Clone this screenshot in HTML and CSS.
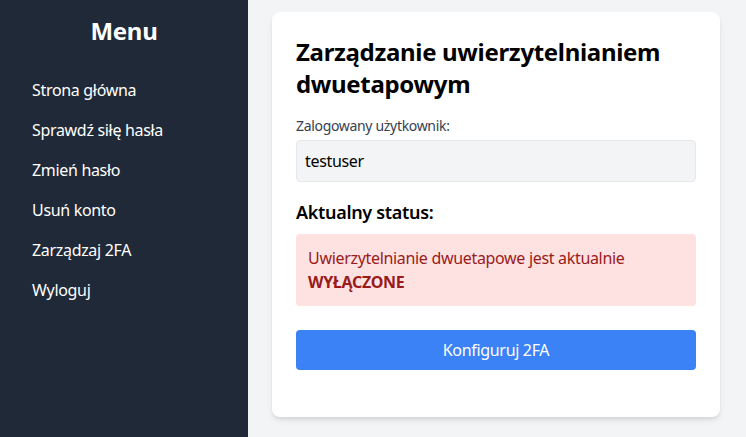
FILE: index.html
```html
<!DOCTYPE html>
<html lang="pl">
<head>
<meta charset="utf-8">
<title>Zarządzaj 2FA</title>
<link rel="stylesheet" href="styles.css">
</head>
<body>
<div class="layout">
  <aside class="sidebar">
    <h2 class="sidebar-title">Menu</h2>
    <ul class="nav">
      <li><a href="#">Strona główna</a></li>
      <li><a href="#">Sprawdź siłę hasła</a></li>
      <li><a href="#">Zmień hasło</a></li>
      <li><a href="#">Usuń konto</a></li>
      <li><a href="#">Zarządzaj 2FA</a></li>
      <li><a href="#">Wyloguj</a></li>
    </ul>
  </aside>
  <main class="main">
    <section class="card">
      <h1 class="card-title">Zarządzanie uwierzytelnianiem dwuetapowym</h1>
      <div class="field">
        <label class="field-label">Zalogowany użytkownik:</label>
        <div class="field-value">testuser</div>
      </div>
      <h3 class="status-title">Aktualny status:</h3>
      <div class="alert">Uwierzytelnianie dwuetapowe jest aktualnie <strong>WYŁĄCZONE</strong></div>
      <button class="btn" type="button">Konfiguruj 2FA</button>
    </section>
  </main>
</div>
</body>
</html>
```

FILE: styles.css
```css
* { box-sizing: border-box; }
html, body { margin: 0; padding: 0; height: 100%; }
body {
  font-family: "Noto Sans", "Open Sans", sans-serif;
  letter-spacing: -0.02em;
  background: #f3f4f6;
  color: #111827;
}
.layout {
  display: flex;
  min-height: 100vh;
}
.sidebar {
  width: 248px;
  flex-shrink: 0;
  background: #1f2937;
  color: #ffffff;
  padding: 15px 16px 12px;
}
.sidebar-title {
  margin: 0 0 23px;
  font-size: 24px;
  line-height: 32px;
  font-weight: 700;
  text-align: center;
}
.nav {
  list-style: none;
  margin: 0;
  padding: 0;
}
.nav li {
  padding: 8px 16px;
}
.nav a {
  color: #ffffff;
  text-decoration: none;
  font-size: 16px;
  line-height: 24px;
}
.main {
  flex: 1;
  padding: 12px 24px;
}
.card {
  width: 448px;
  background: #ffffff;
  border-radius: 8px;
  box-shadow: 0 4px 6px -1px rgba(0,0,0,0.1), 0 2px 4px -2px rgba(0,0,0,0.1);
  padding: 24px 24px 47px;
}
.card-title {
  margin: 0 0 16px;
  font-size: 24px;
  line-height: 32px;
  font-weight: 700;
  color: #000;
}
.field { margin-bottom: 16px; }
.field-label {
  display: block;
  font-size: 14px;
  line-height: 20px;
  color: #374151;
  margin-bottom: 4px;
}
.field-value {
  background: #f3f4f6;
  border: 1px solid #e5e7eb;
  border-radius: 4px;
  padding: 8px;
  font-size: 16px;
  line-height: 24px;
  color: #000;
}
.status-title {
  margin: 0 0 8px;
  font-size: 18px;
  line-height: 28px;
  font-weight: 600;
  color: #000;
}
.alert {
  background: #fee2e2;
  color: #991b1b;
  border-radius: 4px;
  padding: 12px;
  font-size: 16px;
  line-height: 24px;
  margin-bottom: 24px;
}
.btn {
  display: block;
  width: 100%;
  background: #3b82f6;
  color: #ffffff;
  border: none;
  border-radius: 4px;
  padding: 8px 16px;
  font-family: inherit;
  letter-spacing: inherit;
  font-size: 16px;
  line-height: 24px;
}
```
